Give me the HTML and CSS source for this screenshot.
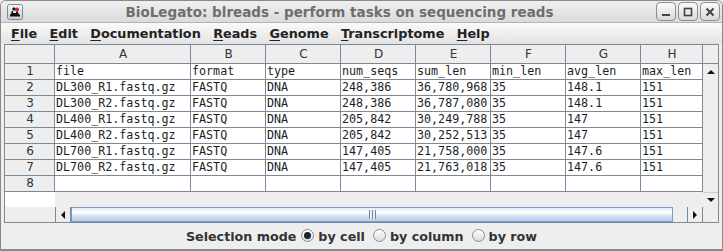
FILE: index.html
```html
<!DOCTYPE html>
<html>
	<head>
		<meta charset="utf-8"/>
		<title>BioLegato: blreads</title>
		<link rel="stylesheet" href="styles.css">
	</head>
	<body>
		<div class="window">
			<div class="titlebar">
				<svg class="app-icon" width="16" height="16" viewBox="0 0 16 16">
					<defs>
						<linearGradient id="ig" x1="0" y1="0" x2="0" y2="1">
							<stop offset="0" stop-color="#f6f8fa"/>
							<stop offset="1" stop-color="#c4ced8"/>
						</linearGradient>
					</defs>
					<rect x="0.5" y="0.5" width="15" height="15" rx="2" fill="url(#ig)" stroke="#7d8894"/>
					<path d="M3 12.5 L13 12.5 L13 11 L11 9 L11 7.5 L9 7.5 L9 9 L6 9 L6 7 L4.5 7 L4.5 9 L3 11 Z" fill="#111"/>
					<path d="M7 3 L9 5 L7 7 L5 5 Z" fill="#111"/>
					<circle cx="10" cy="5.5" r="2" fill="#e02020"/>
				</svg>
				<div class="title">BioLegato: blreads - perform tasks on sequencing reads</div>
				<div class="wm-buttons">
					<span class="wm-btn"><svg width="10" height="10" viewBox="0 0 10 10"><rect x="1" y="7" width="8" height="2" fill="#444"/></svg></span>
					<span class="wm-btn"><svg width="10" height="10" viewBox="0 0 10 10"><rect x="1.5" y="1.5" width="7" height="7" fill="none" stroke="#444" stroke-width="1.6"/></svg></span>
					<span class="wm-btn"><svg width="10" height="10" viewBox="0 0 10 10"><path d="M1.5 1.5 L8.5 8.5 M8.5 1.5 L1.5 8.5" stroke="#444" stroke-width="2"/></svg></span>
				</div>
			</div>

			<div class="menubar">
				<span class="menu"><u>F</u>ile</span>
				<span class="menu"><u>E</u>dit</span>
				<span class="menu"><u>D</u>ocumentation</span>
				<span class="menu"><u>R</u>eads</span>
				<span class="menu"><u>G</u>enome</span>
				<span class="menu"><u>T</u>ranscriptome</span>
				<span class="menu"><u>H</u>elp</span>
			</div>

			<div class="sheet">
				<div class="viewport">
					<div class="row head">
						<div class="cell rh"></div>
						<div class="cell ca">A</div>
						<div class="cell cb">B</div>
						<div class="cell cb">C</div>
						<div class="cell cb">D</div>
						<div class="cell cb">E</div>
						<div class="cell cb">F</div>
						<div class="cell cb">G</div>
						<div class="cell ch">H</div>
					</div>
					<div class="row">
						<div class="cell rh">1</div>
						<div class="cell ca">file</div>
						<div class="cell cb">format</div>
						<div class="cell cb">type</div>
						<div class="cell cb">num_seqs</div>
						<div class="cell cb">sum_len</div>
						<div class="cell cb">min_len</div>
						<div class="cell cb">avg_len</div>
						<div class="cell ch">max_len</div>
					</div>
					<div class="row">
						<div class="cell rh">2</div>
						<div class="cell ca">DL300_R1.fastq.gz</div>
						<div class="cell cb">FASTQ</div>
						<div class="cell cb">DNA</div>
						<div class="cell cb">248,386</div>
						<div class="cell cb">36,780,968</div>
						<div class="cell cb">35</div>
						<div class="cell cb">148.1</div>
						<div class="cell ch">151</div>
					</div>
					<div class="row">
						<div class="cell rh">3</div>
						<div class="cell ca">DL300_R2.fastq.gz</div>
						<div class="cell cb">FASTQ</div>
						<div class="cell cb">DNA</div>
						<div class="cell cb">248,386</div>
						<div class="cell cb">36,787,080</div>
						<div class="cell cb">35</div>
						<div class="cell cb">148.1</div>
						<div class="cell ch">151</div>
					</div>
					<div class="row">
						<div class="cell rh">4</div>
						<div class="cell ca">DL400_R1.fastq.gz</div>
						<div class="cell cb">FASTQ</div>
						<div class="cell cb">DNA</div>
						<div class="cell cb">205,842</div>
						<div class="cell cb">30,249,788</div>
						<div class="cell cb">35</div>
						<div class="cell cb">147</div>
						<div class="cell ch">151</div>
					</div>
					<div class="row">
						<div class="cell rh">5</div>
						<div class="cell ca">DL400_R2.fastq.gz</div>
						<div class="cell cb">FASTQ</div>
						<div class="cell cb">DNA</div>
						<div class="cell cb">205,842</div>
						<div class="cell cb">30,252,513</div>
						<div class="cell cb">35</div>
						<div class="cell cb">147</div>
						<div class="cell ch">151</div>
					</div>
					<div class="row">
						<div class="cell rh">6</div>
						<div class="cell ca">DL700_R1.fastq.gz</div>
						<div class="cell cb">FASTQ</div>
						<div class="cell cb">DNA</div>
						<div class="cell cb">147,405</div>
						<div class="cell cb">21,758,000</div>
						<div class="cell cb">35</div>
						<div class="cell cb">147.6</div>
						<div class="cell ch">151</div>
					</div>
					<div class="row">
						<div class="cell rh">7</div>
						<div class="cell ca">DL700_R2.fastq.gz</div>
						<div class="cell cb">FASTQ</div>
						<div class="cell cb">DNA</div>
						<div class="cell cb">147,405</div>
						<div class="cell cb">21,763,018</div>
						<div class="cell cb">35</div>
						<div class="cell cb">147.6</div>
						<div class="cell ch">151</div>
					</div>
					<div class="row">
						<div class="cell rh">8</div>
						<div class="cell ca"></div>
						<div class="cell cb"></div>
						<div class="cell cb"></div>
						<div class="cell cb"></div>
						<div class="cell cb"></div>
						<div class="cell cb"></div>
						<div class="cell cb"></div>
						<div class="cell ch"></div>
					</div>
				</div>

				<div class="vside">
					<div class="corner-head"></div>
					<div class="sb-btn up"><i class="tri-up"></i></div>
					<div class="vtrack"></div>
					<div class="sb-btn down"><i class="tri-down"></i></div>
				</div>

				<div class="hside">
					<div class="hblank"></div>
					<div class="sb-btn left"><i class="tri-left"></i></div>
					<div class="thumb"><span class="grip"></span></div>
					<div class="htrack"></div>
					<div class="sb-btn right"><i class="tri-right"></i></div>
				</div>
				<div class="corner"></div>
			</div>

			<div class="modebar">
				<span class="mode-label">Selection mode</span>
				<span class="radio on"></span><span class="opt">by cell</span>
				<span class="radio"></span><span class="opt">by column</span>
				<span class="radio"></span><span class="opt">by row</span>
			</div>
		</div>
	</body>
</html>
```

FILE: styles.css
```css
*{margin:0;padding:0;box-sizing:border-box;}
body{background:#eeeeee;font-family:"DejaVu Sans",sans-serif;}
.window
{
	width:723px;
	height:251px;
	background:#eeeeee;
	border:1px solid #8a8a8a;
	border-bottom-width:2px;
	border-radius:6px 6px 0 0;
	overflow:hidden;
}
.titlebar
{
	height:22px;
	display:flex;
	align-items:center;
	padding-left:6px;
	border-bottom:1px solid #b4b4b4;
	background:linear-gradient(#f0f0f0,#dadada);
}
.app-icon{flex:none;}
.title
{
	flex:1;
	text-align:center;
	font-weight:bold;
	font-size:13.5px;
	color:#6e6e6e;
	white-space:nowrap;
}
.wm-buttons
{
	display:flex;
	gap:2px;
	padding-right:2px;
}
.wm-btn
{
	width:20px;
	height:19px;
	display:flex;
	align-items:center;
	justify-content:center;
	border:1px solid #8d8d8d;
	border-radius:4px;
	background:linear-gradient(#fbfbfb,#d9d9d9);
}
.menubar
{
	height:21px;
	display:flex;
	align-items:center;
	padding-left:3.8px;
	background:linear-gradient(#fafafa,#e2e2e2);
}
.menu
{
	padding:0 6.2px;
	font-weight:bold;
	font-size:12.8px;
	color:#222;
}
.menu u{text-underline-offset:2px;}
.sheet
{
	width:715px;
	height:179px;
	margin-left:3px;
	border:1px solid #7a8a99;
	display:grid;
	grid-template-columns:698px 15px;
	grid-template-rows:162px 15px;
	background:#eeeeee;
}
.viewport
{
	overflow:hidden;
	background:linear-gradient(90deg,#ffffff 50px,#eeeeee 50px);
}
.row
{
	display:flex;
	height:16px;
}
.row.head{height:19px;}
.cell
{
	flex:none;
	border-right:1px solid #7a8a99;
	border-bottom:1px solid #7a8a99;
	background:#ffffff;
	font-family:"DejaVu Sans Mono",monospace;
	font-size:11.7px;
	line-height:15px;
	padding-left:1px;
	color:#1e1e1e;
	white-space:nowrap;
	overflow:hidden;
}
.rh
{
	width:50px;
	background:#eeeeee;
	text-align:center;
	font-family:"DejaVu Sans",sans-serif;
	font-size:12px;
	color:#333;
}
.ca{width:136px;}
.cb{width:75px;}
.ch{width:62px;}
.head .cell
{
	background:#eeeeee;
	text-align:center;
	font-family:"DejaVu Sans",sans-serif;
	font-size:12px;
	line-height:18px;
	color:#333;
}
.vside
{
	display:flex;
	flex-direction:column;
}
.corner-head
{
	height:19px;
	flex:none;
	border-bottom:1px solid #7a8a99;
}
.sb-btn
{
	flex:none;
	display:flex;
	align-items:center;
	justify-content:center;
	background:#eeeeee;
}
.sb-btn.up,.sb-btn.down{height:15px;}
.sb-btn.down{border-top:1px solid #c8ced4;}
.vtrack{flex:1;}
.hside
{
	display:flex;
}
.hblank{width:50px;flex:none;}
.sb-btn.left,.sb-btn.right
{
	width:16px;
	border-left:1px solid #7a8a99;
	border-right:1px solid #7a8a99;
}
.thumb
{
	width:602px;
	flex:none;
	display:flex;
	align-items:center;
	justify-content:center;
	border:1px solid #7f9bc0;
	background:linear-gradient(#e2ecf6,#ffffff 35%,#c9dcf1 70%,#b8cfe5);
}
.grip
{
	width:7px;
	height:9px;
	background:repeating-linear-gradient(90deg,#6a84a6 0 1px,#e8f0f8 1px 3px);
}
.htrack{width:14px;flex:none;}
.tri-up,.tri-down,.tri-left,.tri-right{display:block;width:0;height:0;}
.tri-up{border-left:4px solid transparent;border-right:4px solid transparent;border-bottom:4px solid #111;}
.tri-down{border-left:4px solid transparent;border-right:4px solid transparent;border-top:4px solid #111;}
.tri-left{border-top:4px solid transparent;border-bottom:4px solid transparent;border-right:4px solid #111;}
.tri-right{border-top:4px solid transparent;border-bottom:4px solid transparent;border-left:4px solid #111;}
.modebar
{
	height:26px;
	display:flex;
	align-items:center;
	justify-content:center;
	font-weight:bold;
	font-size:12.7px;
	color:#333;
}
.mode-label{margin-right:5px;}
.radio
{
	width:13px;
	height:13px;
	border-radius:50%;
	border:1px solid #8a8f96;
	background:linear-gradient(#ffffff,#d6dbe0);
	display:flex;
	align-items:center;
	justify-content:center;
	margin-top:-2px;
}
.radio.on:after
{
	content:"";
	width:7px;
	height:7px;
	border-radius:50%;
	background:#222;
}
.opt{margin:0 8px 0 4px;}
.opt:last-child{margin-right:0;}
```
